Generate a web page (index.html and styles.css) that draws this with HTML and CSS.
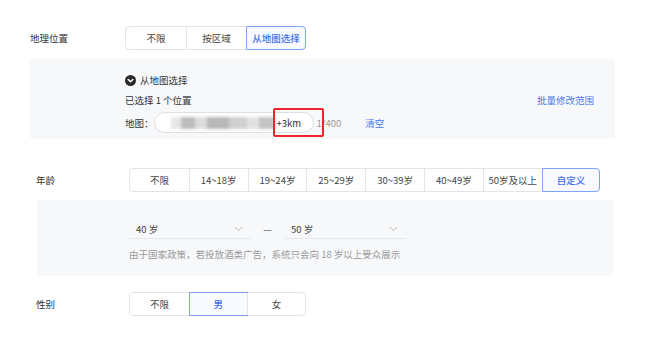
FILE: index.html
```html
<!DOCTYPE html>
<html lang="zh">
<head>
<meta charset="utf-8">
<link rel="stylesheet" href="styles.css">
</head>
<body>
<div class="page">
  <section class="geo">
    <div class="row">
      <div class="label">地理位置</div>
      <div class="seg">
        <div class="opt">不限</div>
        <div class="opt">按区域</div>
        <div class="opt on">从地图选择</div>
      </div>
    </div>
    <div class="panel geo-panel">
      <div class="caret-row">
        <svg class="caret" width="11" height="11" viewBox="0 0 11 11"><circle cx="5.5" cy="5.5" r="5.5" fill="#2b2b2b"/><path d="M3.2 4.5 L5.5 6.8 L7.8 4.5" fill="none" stroke="#fff" stroke-width="1.5" stroke-linecap="round" stroke-linejoin="round"/></svg>
        <span>从地图选择</span>
      </div>
      <div class="sel-row">
        <span>已选择 1 个位置</span>
        <span class="link">批量修改范围</span>
      </div>
      <div class="map-row">
        <span class="map-label">地图：</span>
        <div class="pill">
          <div class="blur">
            <i class="b1"></i><i class="b2"></i><i class="b3"></i><i class="b4"></i><i class="b5"></i><i class="b6"></i><i class="b7"></i>
          </div>
          <span class="km">+3km</span>
          <div class="redbox"></div>
        </div>
        <span class="count">1/400</span>
        <span class="link clear">清空</span>
      </div>
    </div>
  </section>

  <section class="age">
    <div class="row">
      <div class="label">年龄</div>
      <div class="seg">
        <div class="opt">不限</div>
        <div class="opt">14~18岁</div>
        <div class="opt">19~24岁</div>
        <div class="opt">25~29岁</div>
        <div class="opt">30~39岁</div>
        <div class="opt">40~49岁</div>
        <div class="opt">50岁及以上</div>
        <div class="opt on">自定义</div>
      </div>
    </div>
    <div class="panel age-panel">
      <div class="range">
        <div class="select"><span>40 岁</span><svg width="9" height="6" viewBox="0 0 9 6"><path d="M1 1 L4.5 4.5 L8 1" fill="none" stroke="#bbb" stroke-width="1"/></svg></div>
        <span class="dash">—</span>
        <div class="select"><span>50 岁</span><svg width="9" height="6" viewBox="0 0 9 6"><path d="M1 1 L4.5 4.5 L8 1" fill="none" stroke="#bbb" stroke-width="1"/></svg></div>
      </div>
      <div class="hint">由于国家政策，若投放酒类广告，系统只会向 18 岁以上受众展示</div>
    </div>
    <div class="row gender">
      <div class="label">性别</div>
      <div class="seg">
        <div class="opt">不限</div>
        <div class="opt on">男</div>
        <div class="opt">女</div>
      </div>
    </div>
  </section>
</div>
</body>
</html>
```
FILE: styles.css
```css
* { box-sizing: border-box; }
html, body { margin: 0; padding: 0; background: #fff; }
body {
  font-family: "Noto Sans CJK SC", "Noto Sans", sans-serif;
  font-size: 9.5px;
  color: #333;
  width: 653px;
  height: 348px;
  overflow: hidden;
}
.page { padding-top: 26px; }

.row { display: flex; align-items: center; height: 24px; }
.label { color: #333; white-space: nowrap; }

.geo { padding-left: 30px; }
.geo .label { width: 95px; }

.seg {
  display: flex;
  border: 1px solid #e3e5e8;
  border-radius: 4px;
  height: 24px;
  background: #fff;
}
.opt {
  width: 60px;
  display: flex;
  align-items: center;
  justify-content: center;
  border-left: 1px solid #e3e5e8;
  color: #444;
  white-space: nowrap;
}
.opt:first-child { border-left: none; }
.opt.on {
  border: 1px solid #7fa4f5;
  margin: -1px -1px -1px 0;
  color: #3f6ee8;
  background: #f8faff;
  border-radius: 0;
  font-weight: 500;
}
.opt.on:last-child { border-radius: 0 4px 4px 0; }

.panel { background: #f7f8fa; border-radius: 3px; }

.geo-panel {
  margin-top: 9px;
  width: 585px;
  height: 80px;
  padding: 14px 21px 0 95px;
}
.caret-row { display: flex; align-items: center; height: 14px; gap: 4px; }
.caret-row span { color: #333; }
.sel-row {
  margin-top: 6px;
  display: flex;
  justify-content: space-between;
  align-items: center;
  height: 14px;
}
.link { color: #4a78ee; }
.map-row {
  margin-top: 5px;
  display: flex;
  align-items: center;
  height: 21px;
}
.map-label { white-space: nowrap; flex-shrink: 0; }
.pill {
  position: relative;
  flex-shrink: 0;
  width: 160px;
  height: 21px;
  border: 1px solid #dcdfe4;
  border-radius: 11px;
  background: #fff;
  display: flex;
  align-items: center;
}
.blur {
  display: flex;
  align-items: center;
  margin-left: 16px;
  width: 104px;
  height: 14px;
  filter: blur(1.6px);
}
.blur i { display: block; height: 12px; background: #c9c9c9; }
.blur .b1 { width: 10px; background: #e6e6e6; }
.blur .b2 { width: 14px; background: #bdbdbd; }
.blur .b3 { width: 12px; background: #dcdcdc; }
.blur .b4 { width: 22px; background: #b8b8b8; }
.blur .b5 { width: 18px; background: #d0d0d0; }
.blur .b6 { width: 12px; background: #e2e2e2; }
.blur .b7 { width: 16px; background: #c4c4c4; }
.km { margin-left: 2px; color: #333; }
.redbox {
  position: absolute;
  left: 118px;
  top: -5px;
  width: 51px;
  height: 29px;
  border: 2px solid #e8262b;
  border-radius: 2px;
}
.count { margin-left: 3px; color: #999; }
.clear { margin-left: 24px; }

.age { padding-left: 36px; margin-top: 29px; }
.age .label { width: 93px; }
.age .seg .opt { width: 58.8px; }
.age-panel {
  margin-top: 8px;
  margin-left: 1px;
  width: 576px;
  height: 76px;
  padding: 19px 0 0 92px;
}
.range { display: flex; align-items: center; }
.select {
  width: 122px;
  height: 20px;
  border-bottom: 1px solid #e6e8eb;
  display: flex;
  align-items: center;
  justify-content: space-between;
  padding: 0 8px 0 7px;
  color: #444;
}
.dash { width: 33px; text-align: center; color: #555; }
.hint { margin-top: 8px; color: #9a9a9a; }

.gender { margin-top: 16px; }
.gender .opt { width: 58.7px; }
```
